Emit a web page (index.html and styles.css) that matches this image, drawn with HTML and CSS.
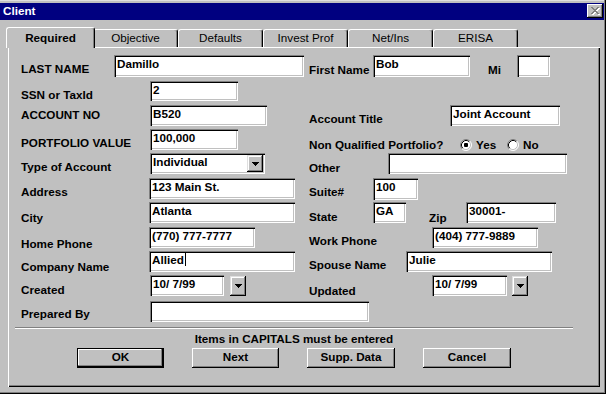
FILE: index.html
```html
<!DOCTYPE html>
<html>
<head>
<meta charset="utf-8">
<link rel="stylesheet" href="styles.css">
</head>
<body>
<div class="window">
  <div class="titlebar">
    <span class="title">Client</span>
    <span class="close">
      <svg width="9" height="8" viewBox="0 0 9 8" shape-rendering="crispEdges">
        <path fill="#fff" transform="translate(1 1)" d="M0 0h2v1H0zM6 0h2v1H6zM1 1h2v1H1zM5 1h2v1H5zM2 2h4v1H2zM3 3h2v1H3zM2 4h4v1H2zM1 5h2v1H1zM5 5h2v1H5zM0 6h2v1H0zM6 6h2v1H6z"/>
        <path fill="#808080" d="M0 0h2v1H0zM6 0h2v1H6zM1 1h2v1H1zM5 1h2v1H5zM2 2h4v1H2zM3 3h2v1H3zM2 4h4v1H2zM1 5h2v1H1zM5 5h2v1H5zM0 6h2v1H0zM6 6h2v1H6z"/>
      </svg>
    </span>
  </div>

  <div class="tabs">
    <div class="tab active">Required</div>
    <div class="tab">Objective</div>
    <div class="tab">Defaults</div>
    <div class="tab">Invest Prof</div>
    <div class="tab">Net/Ins</div>
    <div class="tab">ERISA</div>
  </div>

  <div class="panel">
    <div class="form">
      <div class="row">
        <div class="left"><span class="lbl w93">LAST NAME</span><span class="field tall w190">Damillo</span></div>
        <div class="right"><span class="lbl w64 dn1">First Name</span><span class="field tall w97">Bob</span><span class="lbl mi dn1">Mi</span><span class="field tall w33"></span></div>
      </div>
      <div class="row">
        <div class="left"><span class="lbl w129">SSN or TaxId</span><span class="field short w88">2</span></div>
      </div>
      <div class="row">
        <div class="left"><span class="lbl w129 up4">ACCOUNT NO</span><span class="field w117">B520</span></div>
        <div class="right"><span class="lbl w141">Account Title</span><span class="field w110">Joint Account</span></div>
      </div>
      <div class="row">
        <div class="left"><span class="lbl w129">PORTFOLIO VALUE</span><span class="field w88">100,000</span></div>
        <div class="right"><span class="lbl w151 dn2">Non Qualified Portfolio?</span>
          <span class="radio yes">
            <svg width="12" height="12" viewBox="0 0 12 12">
              <circle cx="6" cy="6" r="5" fill="#fff"/>
              <path d="M9.89 2.11A5.5 5.5 0 0 0 2.11 9.89" fill="none" stroke="#808080"/>
              <path d="M9.18 2.82A4.5 4.5 0 0 0 2.82 9.18" fill="none" stroke="#000"/>
              <path d="M9.89 2.11A5.5 5.5 0 0 1 2.11 9.89" fill="none" stroke="#fff"/>
              <path d="M9.18 2.82A4.5 4.5 0 0 1 2.82 9.18" fill="none" stroke="#c0c0c0"/>
              <rect x="4" y="4" width="4" height="4" rx="1" fill="#000"/>
            </svg>Yes</span>
          <span class="radio">
            <svg width="12" height="12" viewBox="0 0 12 12">
              <circle cx="6" cy="6" r="5" fill="#fff"/>
              <path d="M9.89 2.11A5.5 5.5 0 0 0 2.11 9.89" fill="none" stroke="#808080"/>
              <path d="M9.18 2.82A4.5 4.5 0 0 0 2.82 9.18" fill="none" stroke="#000"/>
              <path d="M9.89 2.11A5.5 5.5 0 0 1 2.11 9.89" fill="none" stroke="#fff"/>
              <path d="M9.18 2.82A4.5 4.5 0 0 1 2.82 9.18" fill="none" stroke="#c0c0c0"/>
            </svg>No</span>
        </div>
      </div>
      <div class="row">
        <div class="left"><span class="lbl w129">Type of Account</span>
          <span class="combo"><span class="combo-text">Individual</span><span class="arrow-btn inset"><svg width="7" height="4" viewBox="0 0 7 4" shape-rendering="crispEdges"><path d="M0 0h7v1H6v1H5v1H4v1H3V3H2V2H1V1H0z"/></svg></span></span>
        </div>
        <div class="right"><span class="lbl w79 dn1">Other</span><span class="field w179"></span></div>
      </div>
      <div class="row">
        <div class="left"><span class="lbl w128">Address</span><span class="field w146">123 Main St.</span></div>
        <div class="right"><span class="lbl w64">Suite#</span><span class="field tall w45">100</span></div>
      </div>
      <div class="row">
        <div class="left"><span class="lbl w128 dn2">City</span><span class="field w146">Atlanta</span></div>
        <div class="right"><span class="lbl w64 dn1">State</span><span class="field w33">GA</span><span class="lbl zip dn2">Zip</span><span class="field w90">30001-</span></div>
      </div>
      <div class="row">
        <div class="left"><span class="lbl w128 dn3">Home Phone</span><span class="field w106">(770) 777-7777</span></div>
        <div class="right"><span class="lbl w123">Work Phone</span><span class="field w106">(404) 777-9889</span></div>
      </div>
      <div class="row">
        <div class="left"><span class="lbl w128 dn2">Company Name</span><span class="field w146">Allied<span class="caret"></span></span></div>
        <div class="right"><span class="lbl w97">Spouse Name</span><span class="field w146">Julie</span></div>
      </div>
      <div class="row">
        <div class="left"><span class="lbl w129 dn1">Created</span><span class="field w74">10/ 7/99</span><span class="arrow-btn date"><svg width="7" height="4" viewBox="0 0 7 4" shape-rendering="crispEdges"><path d="M0 0h7v1H6v1H5v1H4v1H3V3H2V2H1V1H0z"/></svg></span></div>
        <div class="right"><span class="lbl w123 dn2">Updated</span><span class="field w75">10/ 7/99</span><span class="arrow-btn date gap5"><svg width="7" height="4" viewBox="0 0 7 4" shape-rendering="crispEdges"><path d="M0 0h7v1H6v1H5v1H4v1H3V3H2V2H1V1H0z"/></svg></span></div>
      </div>
      <div class="row">
        <div class="left"><span class="lbl w129 up1">Prepared By</span><span class="field w219"></span></div>
      </div>
    </div>

    <div class="footer">
      <div class="sep"></div>
      <p class="note">Items in CAPITALS must be entered</p>
      <div class="buttons">
        <span class="btn default">OK</span>
        <span class="btn">Next</span>
        <span class="btn wide">Supp. Data</span>
        <span class="btn wide">Cancel</span>
      </div>
    </div>
  </div>
</div>
</body>
</html>
```

FILE: styles.css
```css
* {
  box-sizing: border-box;
  margin: 0;
  padding: 0;
}

html, body {
  width: 606px;
  height: 394px;
  overflow: hidden;
}

body {
  background: #c0c0c0;
  font-family: "Liberation Sans", Arial, sans-serif;
  font-size: 11.7px;
  font-weight: bold;
  color: #000;
}

.window {
  width: 606px;
  height: 394px;
  padding-top: 3px;
  background: #c0c0c0;
  box-shadow: inset -1px -1px #000, inset -2px -2px #808080, inset 0 1px #dfdfdf;
}

/* title bar */
.titlebar {
  height: 17px;
  margin-right: 2px;
  padding-left: 3px;
  background: #000080;
  color: #fff;
  display: flex;
  justify-content: space-between;
  align-items: flex-start;
}

.title {
  line-height: 16px;
}

.close {
  width: 16px;
  height: 14px;
  margin: 1px 1px 0 0;
  background: #c0c0c0;
  box-shadow: inset -1px -1px #000, inset 1px 1px #fff, inset -2px -2px #808080;
  display: flex;
  align-items: center;
  justify-content: center;
  padding: 0 0 1px 1px;
}

.close svg {
  display: block;
}

/* tabs */
.tabs {
  display: flex;
  align-items: flex-end;
  height: 20px;
  margin: 7px 0 0 8px;
  position: relative;
  z-index: 1;
}

.tab {
  width: 85px;
  height: 18px;
  border: 1px solid;
  border-color: #fff #000 transparent #fff;
  border-bottom: 0;
  border-radius: 3px 3px 0 0;
  box-shadow: inset -1px 0 #808080;
  background: #c0c0c0;
  font-weight: normal;
  text-align: center;
  line-height: 14px;
  padding-top: 1px;
}

.tab.active {
  width: 89px;
  height: 21px;
  margin: 0 -2px -1px;
  padding-top: 3px;
  font-weight: bold;
  position: relative;
  z-index: 2;
}

/* panel */
.panel {
  width: 592px;
  height: 340px;
  margin-left: 8px;
  padding: 8px 0 0 13px;
  box-shadow: inset 1px 1px #fff, inset -1px -1px #000, inset -2px -2px #808080;
}

.form {
  display: grid;
  grid-template-rows: 26px 24px 24px 24px 25px 24px 25px 24px 24px 26px 21px;
}

.row {
  display: flex;
  align-items: flex-start;
}

.row > *,
.left > *,
.right > * {
  flex: none;
}

.left {
  display: flex;
  align-items: flex-start;
  width: 288px;
}

.right {
  display: flex;
  align-items: flex-start;
}

.lbl {
  line-height: 14px;
  padding-top: 7px;
  white-space: nowrap;
}

.up4 { padding-top: 3px; }
.up1 { padding-top: 6px; }
.dn1 { padding-top: 8px; }
.dn2 { padding-top: 9px; }
.dn3 { padding-top: 10px; }

.mi { margin-left: 18px; width: 29px; }
.zip { margin-left: 23px; width: 37px; }

.w64 { width: 64px; }
.w79 { width: 79px; }
.w93 { width: 93px; }
.w97 { width: 97px; }
.w123 { width: 123px; }
.w128 { width: 128px; }
.w129 { width: 129px; }
.w141 { width: 141px; }
.w151 { width: 151px; }

.field {
  height: 21px;
  background: #fff;
  box-shadow: inset 1px 1px #808080, inset 2px 2px #000, inset -1px -1px #fff, inset -2px -2px #c0c0c0;
  padding: 2px 2px 0 3px;
  line-height: 14px;
  white-space: nowrap;
  overflow: hidden;
}

.field.tall { height: 22px; }
.field.short { height: 20px; }

.field.w33 { width: 33px; }
.field.w45 { width: 45px; }
.field.w74 { width: 74px; }
.field.w75 { width: 75px; }
.field.w88 { width: 88px; }
.field.w90 { width: 90px; }
.field.w97 { width: 97px; }
.field.w106 { width: 106px; }
.field.w110 { width: 110px; }
.field.w117 { width: 117px; }
.field.w146 { width: 146px; }
.field.w179 { width: 179px; }
.field.w190 { width: 190px; }
.field.w219 { width: 219px; }

.caret {
  display: inline-block;
  width: 1px;
  height: 13px;
  background: #000;
  vertical-align: -2px;
  margin-left: 1px;
}

/* radio buttons */
.radio {
  display: flex;
  align-items: center;
  line-height: 14px;
  padding-top: 9px;
}

.radio svg {
  display: block;
  margin-right: 4px;
}

.radio.yes {
  width: 47px;
}

/* combo box */
.combo {
  width: 115px;
  height: 21px;
  background: #fff;
  box-shadow: inset 1px 1px #808080, inset 2px 2px #000, inset -1px -1px #fff, inset -2px -2px #c0c0c0;
  display: flex;
  justify-content: space-between;
  padding: 2px 2px 2px 3px;
}

.combo-text {
  line-height: 14px;
}

.arrow-btn {
  width: 16px;
  height: 17px;
  background: #c0c0c0;
  box-shadow: inset -1px -1px #000, inset 1px 1px #dfdfdf, inset -2px -2px #808080, inset 2px 2px #fff;
  display: flex;
  align-items: center;
  justify-content: center;
}

.arrow-btn svg {
  display: block;
}

.arrow-btn.date {
  height: 20px;
  margin: 1px 0 0 6px;
}

.arrow-btn.gap5 {
  margin-left: 5px;
}

/* footer */
.footer {
  width: 558px;
  margin: 5px 0 0 -6px;
}

.sep {
  height: 2px;
  border-top: 1px solid #808080;
  border-bottom: 1px solid #fff;
}

.note {
  text-align: center;
  line-height: 14px;
  margin-top: 3px;
}

.buttons {
  display: flex;
  justify-content: center;
  gap: 28px;
  margin-top: 2px;
}

.btn {
  width: 87px;
  height: 20px;
  line-height: 14px;
  padding-top: 2px;
  text-align: center;
  background: #c0c0c0;
  box-shadow: inset -1px -1px #000, inset 1px 1px #fff, inset -2px -2px #808080;
}

.btn.wide {
  width: 88px;
}

.btn.default {
  box-shadow: inset 0 0 0 1px #000, inset -2px -2px #000, inset -3px -3px #808080, inset 2px 2px #fff;
}
```
